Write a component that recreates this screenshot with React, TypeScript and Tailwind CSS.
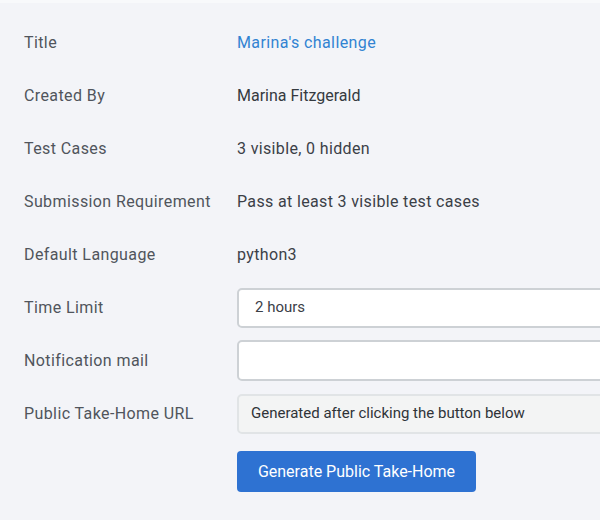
const rows: { label: string; value: string; link?: boolean; tight?: boolean }[] = [
  { label: "Title", value: "Marina's challenge", link: true },
  { label: "Created By", value: "Marina Fitzgerald", tight: true },
  { label: "Test Cases", value: "3 visible, 0 hidden" },
  { label: "Submission Requirement", value: "Pass at least 3 visible test cases" },
  { label: "Default Language", value: "python3" },
];

export default function App() {
  return (
    <div
      className="w-[600px] h-[520px] overflow-hidden bg-[#f3f4f8] text-[16px]"
      style={{ fontFamily: "Roboto, 'Liberation Sans', sans-serif" }}
    >
      <div className="h-[3px] bg-[#f8f9fb]" />
      <div className="pl-6 pt-[13px]">
        {rows.map((r) => (
          <div key={r.label} className="grid grid-cols-[213px_1fr] h-[53px] items-center">
            <span className="text-[#50555c] tracking-[0.4px]">{r.label}</span>
            {r.link ? (
              <a href="#" className="text-[#3183d2] tracking-[0.4px]">
                {r.value}
              </a>
            ) : (
              <span className={r.tight ? "text-[#353a40]" : "text-[#3b4047] tracking-[0.35px]"}>
                {r.value}
              </span>
            )}
          </div>
        ))}

        {/* Time limit */}
        <div className="grid grid-cols-[213px_1fr] h-[53px] items-center">
          <span className="text-[#50555c] tracking-[0.4px]">Time Limit</span>
          <div className="w-[420px] h-[40px] rounded-[5px] border-2 border-[#cdd1d5] bg-white flex items-center pl-[16px] text-[15px] text-[#3b4047]">
            2 hours
          </div>
        </div>

        {/* Notification */}
        <div className="grid grid-cols-[213px_1fr] h-[53px] items-center">
          <span className="text-[#50555c] tracking-[0.4px]">Notification mail</span>
          <div className="w-[420px] h-[41px] rounded-[5px] border-2 border-[#cdd1d5] bg-white" />
        </div>

        {/* URL */}
        <div className="grid grid-cols-[213px_1fr] h-[53px] items-center">
          <span className="text-[#50555c] tracking-[0.4px]">Public Take-Home URL</span>
          <div className="w-[420px] h-[40px] rounded-[5px] border-2 border-[#e1e4e6] bg-[#f3f4f4] flex items-center pl-[12px] text-[15px] text-[#2f3338]">
            Generated after clicking the button below
          </div>
        </div>

        <div className="grid grid-cols-[213px_1fr] mt-[11px]">
          <span />
          <button className="w-[239px] h-[41px] rounded-[4px] bg-[#2e72d2] text-white text-[16px] flex items-center justify-center">
            Generate Public Take-Home
          </button>
        </div>
      </div>
    </div>
  );
}
